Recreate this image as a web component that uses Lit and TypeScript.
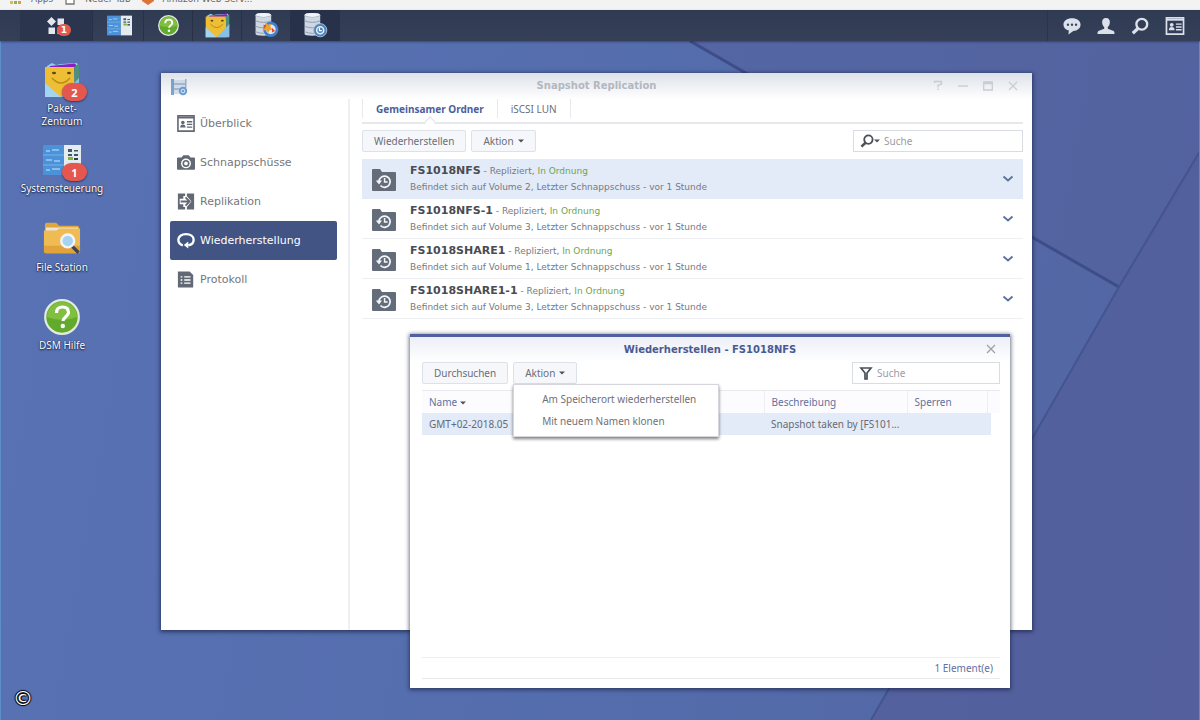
import { LitElement, html, css, svg } from "lit";
import { customElement, property } from "lit/decorators.js";

const paketIcon = html`<svg viewBox="0 0 36 36" aria-hidden="true">
  <path d="M3 4 8 1l4 2 5-1 16-1 2 6H3z" fill="#8fd0ee" />
  <path d="M6 4 31 1.500 34 6v4H4z" fill="#8b1fc4" />
  <path d="M1 5h29l1 30H1z" fill="#eebe35" />
  <path d="m30 5 5-3v31l-4 2z" fill="#4e8f7e" />
  <path d="M1 21 17 35H1z" fill="#a3d5f0" /><path d="M17 35 35 16v19z" fill="#86c0e8" />
  <ellipse cx="10" cy="11" rx="2" ry="1.300" fill="#5b4514" /><ellipse cx="25" cy="11" rx="2" ry="1.300" fill="#5b4514" />
  <path d="M8 16q9 10 18 0" fill="none" stroke="#b98a16" stroke-width="1.400" />
</svg>`;
const panelIcon = html`<svg viewBox="0 0 38 32" aria-hidden="true">
  <path d="M0 1h21v30H0z" fill="#4b92d9" /><path d="M21 1h17v30H21z" fill="#e6ebf0" />
  <path d="M0 11h21M0 21h21" stroke="#79b4ea" />
  <path d="M3 7h4m2-1h7M3 16h6m2 1h6M3 26h4m2-1h8" stroke="#9ccdf5" stroke-width="1.500" />
  <path d="M25 5h4v3h-4zm6 1h4v1.500h-4zM25 10h4v2h-4zm6 0h4v2h-4z" fill="#3e5866" /><path d="M25 13h5v3h-5z" fill="#7fb735" /><path d="M31 14h4v2h-4z" fill="#29424e" />
</svg>`;
const folderIcon = html`<svg viewBox="0 0 40 34" aria-hidden="true">
  <path d="M2 2q0-2 2-2h10l3 3h19q2 0 2 2v4H2z" fill="#e0a63a" /><path d="M3 5h34v4H3z" fill="#e9e6dd" />
  <path d="M1 8h13l3-2h22v24q0 2-2 2H3q-2 0-2-2z" fill="#f0bb52" /><path d="M1 24h38v6q0 2-2 2H3q-2 0-2-2z" fill="#e0a43a" />
  <path d="m30 24 7.500 7.500" stroke="#3c4454" stroke-width="3.500" />
  <circle cx="26" cy="19" r="6.800" fill="#a5d3f3" stroke="#f2f4f6" stroke-width="2.600" />
</svg>`;
const helpIcon = html`<svg viewBox="0 0 36 36" aria-hidden="true">
  <circle cx="18" cy="18" r="16.800" fill="#62aa2c" stroke="#e3eadf" stroke-width="2.200" /><path d="M3 18a15 15 0 0 1 30 0q-15 6-30 0z" fill="#80bf40" />
  <path d="M12.500 14q0-6 6-6t6 5.500c0 4-5.500 4.500-5.500 8.500" fill="none" stroke="#fff" stroke-width="3.200" /><circle cx="18.800" cy="27" r="2.200" fill="#fff" />
</svg>`;
const disks = svg`<path d="M2 3q0-3 10-3t10 3v24q0 2-10 2T2 27z" fill="#cfd8e2" />
  <path d="M2 3q10 4 20 0M2 10q10 4 20 0M2 17q10 4 20 0M2 24q10 4 20 0" fill="none" stroke="#8d9cae" stroke-width="1.200" /><path d="M2 3q0-3 10-3t10 3q-10 4-20 0z" fill="#f0f4f8" />`;
const backupIcon = html`<svg viewBox="0 0 32 32" aria-hidden="true">${disks}
  <circle cx="21.500" cy="21" r="8" fill="#dfe8f2" stroke="#3f80d2" stroke-width="3.500" /><path d="m15 12 3 3 4-1-1 4 3 3-4 1-2 4-2-4-5 0 3-4z" fill="#f2a22b" /><path d="m12 15 4 1-3 4zM23 19l4 4-4 2z" fill="#e14a2c" />
</svg>`;
const replicationIcon = html`<svg viewBox="0 0 32 32" aria-hidden="true">${disks}
  <circle cx="22" cy="22" r="8.500" fill="#4f84b8" stroke="#b6cfe5" /><circle cx="22" cy="22" r="4.500" fill="none" stroke="#e4eef7" stroke-width="2" /><path d="M21 19v3.500h3" fill="none" stroke="#fff" stroke-width="1.500" />
</svg>`;
const windowIcon = html`<svg viewBox="0 0 18 18" aria-hidden="true"><path d="M1 1h3v16H1z" fill="#5f8fc4" /><path d="M4 2h11v14H4z" fill="#c9d7e6" /><path d="M4 6h11M4 11h8" stroke="#7d9cbc" stroke-width="1.300" /><path d="M15 1h1.500v9H15z" fill="#7f9cbb" /><circle cx="13" cy="13" r="4.200" fill="#4a86c8" /><circle cx="13" cy="13" r="1.800" fill="none" stroke="#d7e6f5" /></svg>`;
const appMenuIcon = html`<svg viewBox="0 0 18 18" aria-hidden="true"><g fill="#e3e8ee"><path d="m4.500 0 4.500 4.500L4.500 9 0 4.500z" /><path d="M10.500 1.500H17V8h-6.500zM1.500 10.500H8V17H1.500zM10.500 10.500H17V17h-6.500z" /></g></svg>`;
const chatIcon = html`<svg viewBox="0 0 20 20" aria-hidden="true"><path d="M10 1.500c5.500 0 9.500 3 9.500 7s-3.500 6.500-8 7L6 19.500l.5-4.500C3 14 .5 11.800.5 8.500c0-4 4-7 9.500-7z" fill="#dbe1ea" /><g fill="#343f57"><circle cx="5.500" cy="8.500" r="1.300" /><circle cx="10" cy="8.500" r="1.300" /><circle cx="14.500" cy="8.500" r="1.300" /></g></svg>`;
const userIcon = html`<svg viewBox="0 0 20 20" aria-hidden="true"><path d="M10 1c3 0 4.500 2 4.300 5-.2 2.500-1 4-2.300 5v2l6.500 2.500q1 .5 1 3.500H.5q0-3 1-3.500L8 13v-2C6.700 10 5.900 8.500 5.700 6 5.500 3 7 1 10 1z" fill="#dbe1ea" /></svg>`;
const lensIcon = html`<svg viewBox="0 0 20 20" aria-hidden="true"><circle cx="12" cy="8" r="6" fill="none" stroke="currentColor" stroke-width="2.600" /><path d="m8 12.500-6 5.500" stroke="currentColor" stroke-width="3.600" /></svg>`;
const cardIcon = html`<svg viewBox="0 0 20 19" aria-hidden="true"><path d="M1 1h18v17H1z" fill="none" stroke="currentColor" stroke-width="1.800" /><path d="M1 3h18" stroke="currentColor" stroke-width="1.800" /><circle cx="6.500" cy="8.300" r="2" fill="currentColor" /><path d="M3.500 14q0-3.500 3-3.500t3 3.500z" fill="currentColor" /><path d="M11 7.500h6M11 10.500h6M11 13.500h6" stroke="currentColor" stroke-width="1.500" /></svg>`;
const cameraIcon = html`<svg viewBox="0 0 20 18" aria-hidden="true"><path fill-rule="evenodd" d="M1 3.500h4L7 1h6l2 2.500h4q1 0 1 1V16q0 1-1 1H1q-1 0-1-1V4.500q0-1 1-1zM10 4.500a5.500 5.500 0 1 0 0 11 5.500 5.500 0 0 0 0-11z" fill="currentColor" /><circle cx="10" cy="10" r="3" fill="none" stroke="currentColor" stroke-width="1.800" /></svg>`;
const transferIcon = html`<svg viewBox="0 0 20 18" aria-hidden="true"><path fill="currentColor" d="M1 0h8v3H7v3H3v6h4v3h2v3H1zM11 0h8v18h-8v-3l5-6-5-6z" /><path d="M4 9h9M9.500 4.500 14 9l-4.500 4.500" fill="none" stroke="currentColor" stroke-width="2" /></svg>`;
const restoreIcon = html`<svg viewBox="0 0 20 18" aria-hidden="true"><path d="M6.500 14.300C3.200 13.500 1.500 11 1.500 8.300 1.500 4.500 5 2 10 2s8.500 2.500 8.500 6.300c0 3.200-2.200 5.700-6 6" fill="none" stroke="currentColor" stroke-width="2.600" /><path d="M7 14V9.500M12.500 10v8L7.500 14z" fill="currentColor" /></svg>`;
const logIcon = html`<svg viewBox="0 0 20 18" aria-hidden="true"><path d="M1 0h13l4 4v14H1z" fill="currentColor" /><path d="M4 6h2m2 0h7M4 9.500h2m2 0h7M4 13h2m2 0h7" stroke="#fff" stroke-width="1.500" /></svg>`;
const sharedFolderIcon = html`<svg viewBox="0 0 24 24" aria-hidden="true"><path d="M0 2q0-1 1-1h7l2 3h13q1 0 1 1v17q0 1-1 1H1q-1 0-1-1z" fill="#646b79" /><path d="M7 13.500a5.600 5.600 0 1 1 1.500 4" fill="none" stroke="#f4f6fa" stroke-width="1.800" /><path d="m3.800 12.500 3.200 4 3-4z" fill="#f4f6fa" /><path d="M12.600 10v4h3" fill="none" stroke="#f4f6fa" stroke-width="1.500" /></svg>`;
const chevronIcon = html`<svg viewBox="0 0 12 8" aria-hidden="true"><path d="m1.500 1.500 4.500 4 4.500-4" fill="none" stroke="#5d719f" stroke-width="1.800" /></svg>`;
const funnelIcon = html`<svg viewBox="0 0 14 14" aria-hidden="true"><path d="M2 2h10L8 7v6H6V7z" fill="none" stroke="#4a5058" stroke-width="1.700" /></svg>`;
const caret = html`<svg class="caret" viewBox="0 0 6 4" aria-hidden="true"><path d="M0 .5h6L3 3.500z" fill="currentColor" /></svg>`;
const closeIcon = html`<svg viewBox="0 0 10 10" aria-hidden="true"><path d="m1 1 8 8M9 1 1 9" stroke="currentColor" stroke-width="1.200" fill="none" /></svg>`;

const base = css`
  :host { display: block; box-sizing: border-box; }
  * { box-sizing: border-box; }
  svg { display: block; }
  button { font: inherit; color: inherit; background: none; border: 0; padding: 0; margin: 0; cursor: pointer; }
  .ui { font-family: "Noto Sans", "DejaVu Sans", sans-serif; font-size: 10px; }
  .btn { height: 22px; padding: 0 11px; border: 1px solid #dce1ea; border-radius: 2px; background: #f5f7fb; color: #6a6e78; display: flex; align-items: center; gap: 4px; white-space: nowrap; }
  .caret { width: 6px; height: 4px; color: #4d525c; }
  .toolbar { display: flex; align-items: center; gap: 5px; }
  .search { margin-left: auto; height: 22px; border: 1px solid #d9dce2; background: #fff; display: flex; align-items: center; padding: 0 6px; color: #4a5058; }
  .search svg { flex: none; }
  .search .glyph { width: 14px; height: 14px; }
  .search input { flex: 1; min-width: 0; border: 0; outline: 0; background: none; font: inherit; padding: 0; margin-left: 4px; color: #555; }
  .search input::placeholder { color: #9a9ca2; opacity: 1; }
`;

@customElement("restore-dialog")
class RestoreDialog extends LitElement {
  static styles = [base, css`
    :host { display: flex; flex-direction: column; background: #fff; border-top: 3px solid #5060a0; box-shadow: 0 1px 4px 1px rgba(20, 28, 60, 0.6); }
    .title { position: relative; height: 25px; flex: none; background: linear-gradient(#eceff6, #fff); display: grid; place-items: center; }
    h2 { margin: 0; font-size: 10px; font-weight: 700; color: #4b5a94; }
    .close { position: absolute; right: 14px; top: 7px; width: 10px; height: 10px; color: #9a9fa9; }
    .body { flex: 1; padding: 0 10px 9px 12px; display: flex; flex-direction: column; }
    .menu-anchor { position: relative; }
    .menu { position: absolute; left: 0; top: 22px; z-index: 2; width: 206px; margin: 0; padding: 3px 0 4px; list-style: none; background: #fff; border: 1px solid #d5d7dc; box-shadow: 0 2px 3px rgba(0, 0, 0, 0.5); color: #6f7178; }
    .menu button { display: block; width: 100%; height: 22px; padding-left: 28px; text-align: left; white-space: nowrap; }
    .search { width: 148px; }
    table { margin-top: 6px; width: 100%; table-layout: fixed; border-collapse: collapse; }
    th, td { height: 22px; padding: 0 0 0 7px; text-align: left; font-weight: 400; white-space: nowrap; }
    th { border-top: 1px solid #e8eaef; border-right: 1px solid #eceef2; color: #6270a0; background: #fcfcfe; }
    th:last-child { border-right: 0; }
    th .caret { display: inline-block; vertical-align: middle; margin-left: 3px; }
    td { background: #e3eaf8; color: #666a74; }
    td:last-child { background: linear-gradient(#e3eaf8, #e3eaf8) no-repeat 0 0 / 4px 100%; }
    .c-desc { width: 143px; } .c-lock { width: 80px; } .c-end { width: 13px; }
    .footer { margin-top: auto; height: 22px; border-top: 1px solid #eeeff2; border-bottom: 1px solid #e8e9ed; display: flex; align-items: center; justify-content: flex-end; padding-right: 7px; color: #6270a0; }
  `];
  render() {
    return html`
      <div class="title"><h2>Wiederherstellen - FS1018NFS</h2><button class="close" aria-label="Schließen">${closeIcon}</button></div>
      <div class="body ui">
        <div class="toolbar">
          <button class="btn">Durchsuchen</button>
          <div class="menu-anchor">
            <button class="btn" aria-haspopup="menu" aria-expanded="true">Aktion ${caret}</button>
            <ul class="menu"><li><button>Am Speicherort wiederherstellen</button></li><li><button>Mit neuem Namen klonen</button></li></ul>
          </div>
          <label class="search"><span class="glyph">${funnelIcon}</span><input type="text" placeholder="Suche" aria-label="Suche" /></label>
        </div>
        <table>
          <colgroup><col /><col class="c-desc" /><col class="c-lock" /><col class="c-end" /></colgroup>
          <thead><tr><th>Name${caret}</th><th>Beschreibung</th><th>Sperren</th><th></th></tr></thead>
          <tbody><tr><td>GMT+02-2018.05</td><td>Snapshot taken by [FS101...</td><td></td><td></td></tr></tbody>
        </table>
        <div class="footer">1 Element(e)</div>
      </div>`;
  }
}

interface Share { name: string; volume: number; }

@customElement("snapshot-window")
class SnapshotWindow extends LitElement {
  @property({ attribute: false }) shares: Share[] = [
    { name: "FS1018NFS", volume: 2 }, { name: "FS1018NFS-1", volume: 3 },
    { name: "FS1018SHARE1", volume: 1 }, { name: "FS1018SHARE1-1", volume: 3 },
  ];
  @property() active = "Wiederherstellung";
  static styles = [base, css`
    :host { display: flex; flex-direction: column; background: linear-gradient(#dde1e9, #fff 26px); box-shadow: 0 1px 4px 1px rgba(20, 28, 60, 0.65); }
    .title { position: relative; height: 26px; flex: none; display: grid; place-items: center; }
    h1 { margin: 0; font-size: 10px; font-weight: 700; color: #b3b7bf; }
    .app { position: absolute; left: 9px; top: 5px; width: 18px; height: 18px; opacity: 0.8; }
    .controls { position: absolute; right: 14px; top: 7px; display: flex; gap: 15px; color: #c9ccd2; }
    .controls button { width: 10px; height: 11px; }
    .columns { flex: 1; display: flex; min-height: 0; }
    nav { width: 189px; flex: none; padding: 5px 11px 0 9px; border-right: 2px solid #eeeff2; }
    nav a { display: flex; align-items: center; gap: 5px; height: 39px; padding-left: 7px; font-size: 11px; color: #74777e; text-decoration: none; border-radius: 2px; }
    nav svg { width: 18px; height: 17px; color: #626874; }
    nav a.on, nav a.on svg { color: #fff; }
    nav a.on { background: #425484; }
    main { flex: 1; min-width: 0; padding: 0 9px 0 12px; }
    .tabs { display: flex; height: 25px; border-bottom: 2px solid #e7e8ec; }
    .tabs button { position: relative; height: 19px; padding: 0 13px; border-right: 1px solid #e7e9ed; color: #6a6e78; white-space: nowrap; }
    .tabs .on { font-weight: 700; color: #4d5e9c; border-left: 1px solid #e7e9ed; }
    .tabs .on::after { content: ""; position: absolute; left: 50%; bottom: -8px; width: 7px; height: 7px; margin-left: -4px; background: #fff; border: solid #e0e2e7; border-width: 1px 0 0 1px; transform: rotate(45deg); }
    .toolbar { padding: 6px 0 7px; }
    .search { width: 170px; }
    ul { margin: 0; padding: 0; list-style: none; }
    .row { display: flex; align-items: center; height: 40px; padding: 0 9px 0 10px; border-bottom: 1px solid #eeeff3; gap: 14px; color: #767a82; }
    .row.on { background: #e3eaf8; border-color: #e3eaf8; }
    .row > svg { width: 24px; height: 24px; flex: none; margin-top: 2px; }
    .text { flex: 1; min-width: 0; line-height: 16px; }
    .text div { white-space: nowrap; }
    strong { font-size: 11px; color: #494c53; }
    em { font-style: normal; color: #6aa64f; }
    .more { width: 12px; height: 8px; }
  `];
  render() {
    const items: [string, unknown][] = [["Überblick", cardIcon], ["Schnappschüsse", cameraIcon], ["Replikation", transferIcon], ["Wiederherstellung", restoreIcon], ["Protokoll", logIcon]];
    return html`
      <div class="title">
        <div class="app">${windowIcon}</div><h1>Snapshot Replication</h1>
        <div class="controls">
          <button aria-label="Hilfe"><svg viewBox="0 0 10 11"><path d="M1.500 3V1.500h7V4L5 5.500V7.500M5 8.500V10" fill="none" stroke="currentColor" stroke-width="1.400" /></svg></button>
          <button aria-label="Minimieren"><svg viewBox="0 0 10 11"><path d="M0 6h10" stroke="currentColor" stroke-width="1.400" /></svg></button>
          <button aria-label="Maximieren"><svg viewBox="0 0 10 11"><path d="M.7 2h8.600v8H.7zM.7 3.500h8.600" fill="none" stroke="currentColor" stroke-width="1.300" /></svg></button>
          <button aria-label="Schließen">${closeIcon}</button>
        </div>
      </div>
      <div class="columns">
        <nav>${items.map(([label, icon]) => html`<a href="#" class=${label === this.active ? "on" : ""}>${icon}${label}</a>`)}</nav>
        <main>
          <div class="tabs ui"><button class="on">Gemeinsamer Ordner</button><button>iSCSI LUN</button></div>
          <div class="toolbar ui">
            <button class="btn">Wiederherstellen</button><button class="btn">Aktion ${caret}</button>
            <label class="search"><span class="glyph">${lensIcon}</span>${caret}<input type="text" placeholder="Suche" aria-label="Suche" /></label>
          </div>
          <ul>${this.shares.map((s, i) => html`<li class="row ${i === 0 ? "on" : ""}">${sharedFolderIcon}
            <div class="text"><div><strong>${s.name}</strong> - Repliziert, <em>In Ordnung</em></div><div>Befindet sich auf Volume ${s.volume}, Letzter Schnappschuss - vor 1 Stunde</div></div>
            <button class="more" aria-label="Details">${chevronIcon}</button></li>`)}</ul>
        </main>
      </div>`;
  }
}

@customElement("app-root")
class AppRoot extends LitElement {
  static styles = [base, css`
    :host { display: flex; flex-direction: column; height: 100vh; overflow: hidden; font: 9px/12px "DejaVu Sans", Verdana, sans-serif; color: #666; }
    .bookmarks { height: 10px; flex: none; overflow: hidden; background: #f4f3f4; display: flex; align-items: flex-end; gap: 9px; padding: 0 0 5px 10px; color: #666; white-space: nowrap; }
    .bookmarks svg { width: 12px; height: 12px; }
    .bookmarks span { margin-right: 2px; }
    .bookmarks span.first { margin-left: 0; }
    .taskbar { height: 31px; flex: none; display: flex; background: linear-gradient(#2f3a53, #354058); padding: 0 6px 0 20px; z-index: 1; box-shadow: 0 1px 2px rgba(20, 30, 70, 0.5); }
    .task { position: relative; width: 49px; display: grid; place-items: center; border-right: 1px solid #283147; }
    .task svg { width: 25px; height: 25px; }
    .task.help svg { width: 21px; height: 21px; }
    .task.menu { width: 73px; margin-right: 2px; background: #2b354d; }
    .task.menu svg { width: 18px; height: 18px; }
    .task.open { background: #27314a; }
    .tray { margin-left: auto; display: flex; align-items: center; gap: 16px; padding: 0 9px 0 15px; border-left: 1px solid #2a344b; color: #dbe1ea; }
    .tray svg { width: 18px; height: 18px; }
    .tray .last svg { width: 20px; }
    .badge { position: absolute; display: grid; place-items: center; border-radius: 9px; background: #e4574f; color: #fff; font-weight: 700; }
    .task .badge { left: 37px; top: 14px; width: 14px; height: 12px; }
    .desktop { position: relative; flex: 1; background: linear-gradient(100deg, #5872b4, #546cab 60%, #5364a2); }
    .wall { position: absolute; inset: 0; width: 100%; height: 100%; }
    .edge { position: absolute; inset: 0; border: solid #5c8fca; border-width: 0 1px; }
    .icons { position: relative; width: 124px; padding-top: 21px; display: grid; grid-template-rows: 80px 79px 78px 60px; justify-items: center; }
    .icon { display: flex; flex-direction: column; align-items: center; position: relative; width: 100%; color: #fff; text-decoration: none; text-align: center; line-height: 13px; text-shadow: 0 1px 2px #101a3c, 0 0 1px #101a3c; }
    .icon svg { width: 38px; height: 36px; margin-bottom: 4px; }
    .icon .badge { left: 62px; top: 21px; width: 25px; height: 18px; font-size: 11px; text-shadow: none; box-shadow: 0 1px 2px rgba(20, 20, 50, 0.6); }
    .win { position: absolute; left: 161px; right: 168px; top: 32px; bottom: 90px; }
    .dlg { position: absolute; left: 410px; right: 190px; top: 293px; bottom: 32px; }
    .copy { position: absolute; left: 13px; bottom: 11px; font-size: 20px; line-height: 22px; color: #fff; text-shadow: 1px 0 1px #000, -1px 0 1px #000, 0 1px 1px #000, 0 -1px 1px #000; }
  `];
  render() {
    return html`
      <div class="bookmarks">
        <svg viewBox="0 0 12 12"><path d="M0 8h3v3H0z" fill="#e0b94a" /><path d="M4 8h3v3H4z" fill="#80b36c" /><path d="M8 8h3v3H8z" fill="#d8a13b" /></svg><span>Apps</span>
        <svg viewBox="0 0 12 12"><path d="M2 1h8v10H2z" fill="#fff" stroke="#777" stroke-width="1.300" /></svg><span>Neuer Tab</span>
        <svg viewBox="0 0 12 12"><path d="m6 0 6 4v4l-6 4-6-4V4z" fill="#dc7437" /></svg><span>Amazon Web Serv...</span>
      </div>
      <div class="taskbar">
        <button class="task menu" aria-label="Hauptmenü">${appMenuIcon}<span class="badge">1</span></button>
        <button class="task" aria-label="Systemsteuerung">${panelIcon}</button>
        <button class="task help" aria-label="DSM Hilfe">${helpIcon}</button>
        <button class="task" aria-label="Paket-Zentrum">${paketIcon}</button>
        <button class="task" aria-label="Backup">${backupIcon}</button>
        <button class="task open" aria-label="Snapshot Replication">${replicationIcon}</button>
        <div class="tray"><button aria-label="Benachrichtigungen">${chatIcon}</button><button aria-label="Benutzer">${userIcon}</button><button aria-label="Suchen">${lensIcon}</button><button class="last" aria-label="Widgets">${cardIcon}</button></div>
      </div>
      <div class="desktop">
        <svg class="wall" viewBox="0 0 1200 679" preserveAspectRatio="none" aria-hidden="true">
          <path d="M690 0 1119 246 1200 120V0z" fill="#53609d" opacity=".55" />
          <path d="M1200 110 1119 246 871 679H1200z" fill="#545e9b" opacity=".7" />
          <path d="M690 0 1119 246" stroke="#3e4d88" stroke-width="3" fill="none" /><path d="M1200 110 1119 246 871 679" stroke="#44548f" stroke-width="2" fill="none" />
        </svg>
        <div class="edge"></div>
        <div class="icons ui">
          <a class="icon" href="#">${paketIcon}<span class="badge">2</span><span>Paket-<br />Zentrum</span></a>
          <a class="icon" href="#">${panelIcon}<span class="badge">1</span><span>Systemsteuerung</span></a>
          <a class="icon" href="#">${folderIcon}<span>File Station</span></a>
          <a class="icon" href="#">${helpIcon}<span>DSM Hilfe</span></a>
        </div>
        <snapshot-window class="win"></snapshot-window>
        <restore-dialog class="dlg"></restore-dialog>
        <div class="copy">©</div>
      </div>`;
  }
}
